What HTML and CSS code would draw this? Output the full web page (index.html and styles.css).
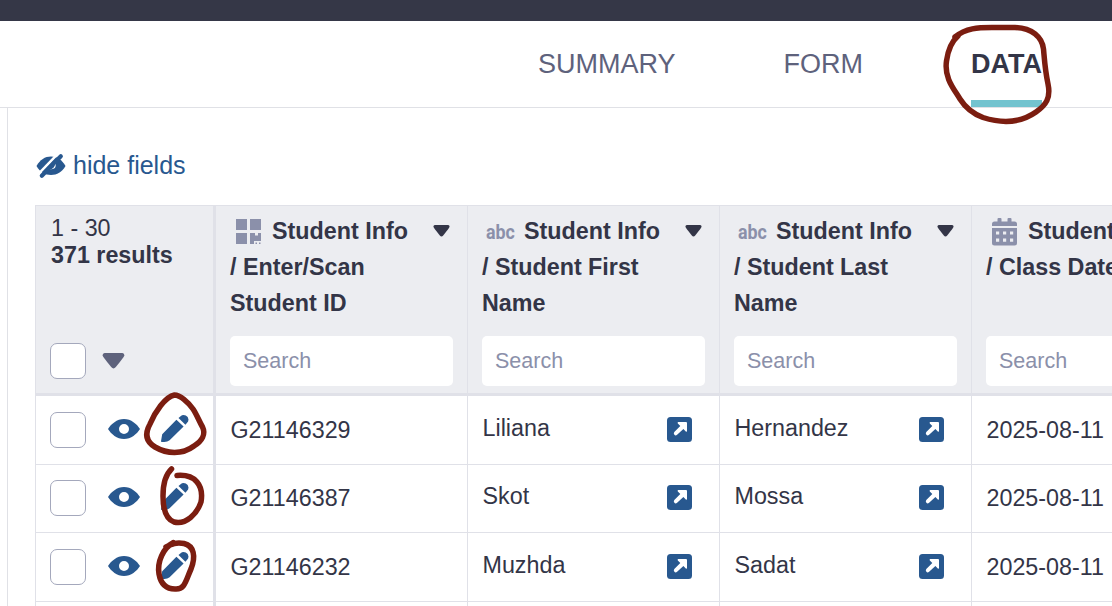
FILE: index.html
```
<!DOCTYPE html>
<html lang="en">
<head>
<meta charset="utf-8">
<title>Data</title>
<link rel="stylesheet" href="styles.css">
</head>
<body>
<svg class="symbols" aria-hidden="true">
  <symbol id="eye" viewBox="0 0 32 20"><path fill-rule="evenodd" d="M0 10C3 5 9 0 16 0S29 5 32 10C29 15 23 20 16 20S3 15 0 10ZM16 5A5 5 0 1 0 16 15A5 5 0 1 0 16 5Z"/></symbol>
  <symbol id="pencil" viewBox="0 0 28 28"><path d="M15.400 4.800L22.600 11.600L8.600 25.300Q6.500 27 3.300 27H.8Q0 27 0 26.200L1.200 19.200ZM17.500 3L19.600 1.200Q21.800 -.6 24.800 .6Q27.200 1.800 27.500 4.400Q27.500 6.400 25.900 8L24.400 9.700Z"/></symbol>
  <symbol id="open" viewBox="0 0 25 25"><rect width="25" height="25" rx="3.5"/><path fill="#fff" d="M11.200 5H19Q20 5 20 6V14Q19.800 15.200 18.800 14.400L16.400 12L10.100 17.700Q8.600 19 7.400 17.800T7.300 15L13.300 8.900L10.800 6.400Q10.200 5.200 11.200 5Z"/></symbol>
  <symbol id="caret" viewBox="0 0 18 12" preserveAspectRatio="none"><path d="M2 0H16Q17.600 .2 17.500 1.800Q17.400 2.700 10.800 10.500Q9 12.600 7.200 10.500Q.6 2.700 .5 1.800Q.4 .2 2 0Z"/></symbol>
</svg>
<div class="topbar"></div>
<nav class="tabs">
  <a class="tab">SUMMARY</a>
  <a class="tab">FORM</a>
  <a class="tab active">DATA</a>
</nav>
<main class="content">
  <div class="toolbar">
    <svg class="hide-icon" viewBox="0 0 30 26"><path d="M.5 13C4 6.800 9 3.500 15 3.500S26 6.800 29.500 13C26 19.200 21 22 15 22S4 19.200 .5 13Z"/><path class="slash-gap" d="M2.500 20.800L21.500 1.200"/><path class="slash" d="M5.800 22.800L24.800 3.200"/><path class="pupil" d="M13.500 16.500Q18.500 16 19.300 10.800Q21.500 16.500 13.500 16.500Z"/></svg>
    <span>hide fields</span>
  </div>
  <div class="table">
    <div class="row head">
      <div class="cell control">
        <div class="range">1 - 30</div>
        <div class="total">371 results</div>
        <div class="select-all"><span class="check"></span><svg class="caret-large"><use href="#caret"/></svg></div>
      </div>
      <div class="cell">
        <svg class="menu"><use href="#caret"/></svg>
        <div class="title"><svg class="type qr" viewBox="0 0 26 26"><path d="M0 0H11V11H0ZM14 0H25V11H14ZM0 14H11V25H0ZM14 14H19V16.500H22V14H25V22H18V25H14ZM19.500 23.500H21V25H19.500ZM23 23.500H24.500V25H23Z"/></svg>Student Info<br>/ Enter/Scan<br>Student ID</div>
        <div class="search">Search</div>
      </div>
      <div class="cell">
        <svg class="menu"><use href="#caret"/></svg>
        <div class="title"><span class="type abc">abc</span>Student Info<br>/ Student First<br>Name</div>
        <div class="search">Search</div>
      </div>
      <div class="cell">
        <svg class="menu"><use href="#caret"/></svg>
        <div class="title"><span class="type abc">abc</span>Student Info<br>/ Student Last<br>Name</div>
        <div class="search">Search</div>
      </div>
      <div class="cell">
        <div class="title"><svg class="type calendar" viewBox="0 0 25 28"><path fill-rule="evenodd" d="M0 8V6Q0 3.500 2.500 3.500H5.500V1Q5.500 0 6.500 0H8.500Q9.500 0 9.500 1V3.500H15.500V1Q15.500 0 16.500 0H18.500Q19.500 0 19.500 1V3.500H22.500Q25 3.500 25 6V8ZM0 10H25V25Q25 27.500 22.500 27.500H2.500Q0 27.500 0 25ZM4 13.500V16.500H7.200V13.500ZM11 13.500V16.500H14.200V13.500ZM18 13.500V16.500H21.200V13.500ZM4 20.500V23.700H7.200V20.500ZM11 20.500V23.700H14.200V20.500ZM18 20.500V23.700H21.200V20.500Z"/></svg>Student Info<br>/ Class Date</div>
        <div class="search">Search</div>
      </div>
    </div>
    <div class="row">
      <div class="cell control"><span class="check"></span><svg class="eye"><use href="#eye"/></svg><svg class="pencil"><use href="#pencil"/></svg></div>
      <div class="cell plain">G21146329</div>
      <div class="cell">Liliana<svg class="open"><use href="#open"/></svg></div>
      <div class="cell">Hernandez<svg class="open"><use href="#open"/></svg></div>
      <div class="cell plain">2025-08-11</div>
    </div>
    <div class="row short">
      <div class="cell control"><span class="check"></span><svg class="eye"><use href="#eye"/></svg><svg class="pencil"><use href="#pencil"/></svg></div>
      <div class="cell plain">G21146387</div>
      <div class="cell">Skot<svg class="open"><use href="#open"/></svg></div>
      <div class="cell">Mossa<svg class="open"><use href="#open"/></svg></div>
      <div class="cell plain">2025-08-11</div>
    </div>
    <div class="row">
      <div class="cell control"><span class="check"></span><svg class="eye"><use href="#eye"/></svg><svg class="pencil"><use href="#pencil"/></svg></div>
      <div class="cell plain">G21146232</div>
      <div class="cell">Muzhda<svg class="open"><use href="#open"/></svg></div>
      <div class="cell">Sadat<svg class="open"><use href="#open"/></svg></div>
      <div class="cell plain">2025-08-11</div>
    </div>
    <div class="row last">
      <div class="cell control"></div><div class="cell"></div><div class="cell"></div><div class="cell"></div><div class="cell"></div>
    </div>
  </div>
</main>
<svg class="marks" viewBox="0 0 1112 606">
  <path d="M955 37C966 28 978 27.500 992 27.500H1015C1032 28 1042 37 1043.500 49C1044.500 60 1045 70 1048 84C1051 98 1046 105 1036 112C1019 124 1000 123 983 117.500C971 113 965 107 960 99C954 89 944 78 946.500 61C948 50 951 42 958 36"/>
  <path d="M174.500 395C180 395 188 402 193 409C197 415 199 421 202.500 427C206 434 202 441 194 446C182 455 167 454 155 447C145 441 145 433 150 424C155 412 165 397 174.500 395Z"/>
  <path d="M171.500 469C164 476 163 486 163 496C163 509 166 519 174 522C186 525 197 514 201 502C204 485 195 474 177 475.500"/>
  <path d="M173.500 542.500C163 548 157 562 159 574C161 585 167 589 175 589C185 590 186 580 191 569C196 556 194 546 184 543.500C176 542 172 544 166 547"/>
</svg>
</body>
</html>
```
FILE: styles.css
```
* { box-sizing: border-box; }
body {
  position: relative;
  width: 1112px;
  height: 606px;
  margin: 0;
  overflow: hidden;
  background: #fff;
  color: #333547;
  font-family: "Liberation Sans", Arial, sans-serif;
  font-size: 23.3px;
}
svg { display: block; flex: none; fill: #28588f; }
.symbols { position: absolute; width: 0; height: 0; }
.topbar { height: 21px; background: #353747; }
.tabs {
  display: flex;
  gap: 108px;
  height: 87px;
  padding-left: 538px;
  border-bottom: 1px solid #e0e1e6;
  font-size: 27px;
  color: #5e627c;
}
.tab { height: 86px; line-height: 87px; white-space: nowrap; }
.active { border-bottom: 7px solid #73c3cf; font-weight: bold; color: #333547; }
.content {
  height: 498px;
  margin-left: 7px;
  padding-left: 27px;
  overflow: hidden;
  border-left: 1px solid #e0e1e6;
}
.toolbar {
  display: flex;
  align-items: center;
  gap: 7px;
  height: 97px;
  padding: 18px 0 0 1px;
  color: #28588f;
  font-size: 25px;
}
.hide-icon { width: 30px; height: 26px; }
.slash { stroke: #28588f; stroke-width: 4.2; stroke-linecap: round; }
.slash-gap { stroke: #fff; stroke-width: 2.4; }
.pupil { fill: #fff; }
.table { width: 1180px; border-left: 1px solid #e0e1e8; border-top: 1px solid #e0e1e8; }
.row { display: flex; height: 69px; border-bottom: 1px solid #e0e1e8; }
.short { height: 68px; }
.cell {
  display: flex;
  position: relative;
  flex: none;
  align-items: center;
  justify-content: space-between;
  width: 252px;
  padding: 0 27px 4px 14.5px;
  border-right: 1px solid #e0e1e8;
  white-space: nowrap;
}
.plain { padding-bottom: 0; }
.control { width: 180px; padding: 0 0 0 14px; border-right-width: 3px; justify-content: flex-start; }
.short .cell { padding-bottom: 4px; }
.short .plain, .short .control { padding-bottom: 1px; }
.last { height: 5px; border-bottom: 0; }
.check { flex: none; width: 36px; height: 36px; border: 1px solid #a4a8bc; border-radius: 7px; background: #fff; }
.eye { width: 32px; height: 20px; margin: 0 21px 2px 22px; }
.pencil { width: 28px; height: 28px; margin-bottom: 3px; }
.open { width: 25px; height: 25px; margin-top: 2px; }
.head { height: 190px; border-bottom-width: 3px; background: #ecedf1; }
.head .cell { flex-direction: column; align-items: stretch; padding: 7px 14px 7px; }
.head .control { justify-content: flex-start; padding-top: 9px; }
.range, .total { line-height: 27px; padding-left: 1px; }
.total, .title { font-weight: bold; }
.title { line-height: 36px; }
.type { display: inline-block; fill: #8b90aa; color: #8b90aa; }
.qr { width: 26px; height: 26px; margin: 0 10px 0 6px; vertical-align: -6px; }
.abc { width: 34px; margin: 0 4px 0 4px; font: bold 21px/24px Roboto, sans-serif; transform: scaleX(.85); transform-origin: left; }
.calendar { width: 25px; height: 28px; margin: 0 11px 0 6px; vertical-align: -7px; }
.menu { position: absolute; top: 19px; right: 17.500px; width: 17px; height: 12px; fill: #333547; }
.search { height: 50px; padding-left: 13px; border-radius: 5px; background: #fff; color: #8b90aa; line-height: 50px; font-size: 21.5px; }
.select-all { display: flex; align-items: center; gap: 16px; margin-top: 74px; }
.caret-large { width: 23px; height: 16px; fill: #5e627c; }
.marks { position: absolute; inset: 0; width: 1112px; height: 606px; fill: none; stroke: #7b1d10; stroke-width: 5.5; stroke-linecap: round; stroke-linejoin: round; pointer-events: none; }
```
